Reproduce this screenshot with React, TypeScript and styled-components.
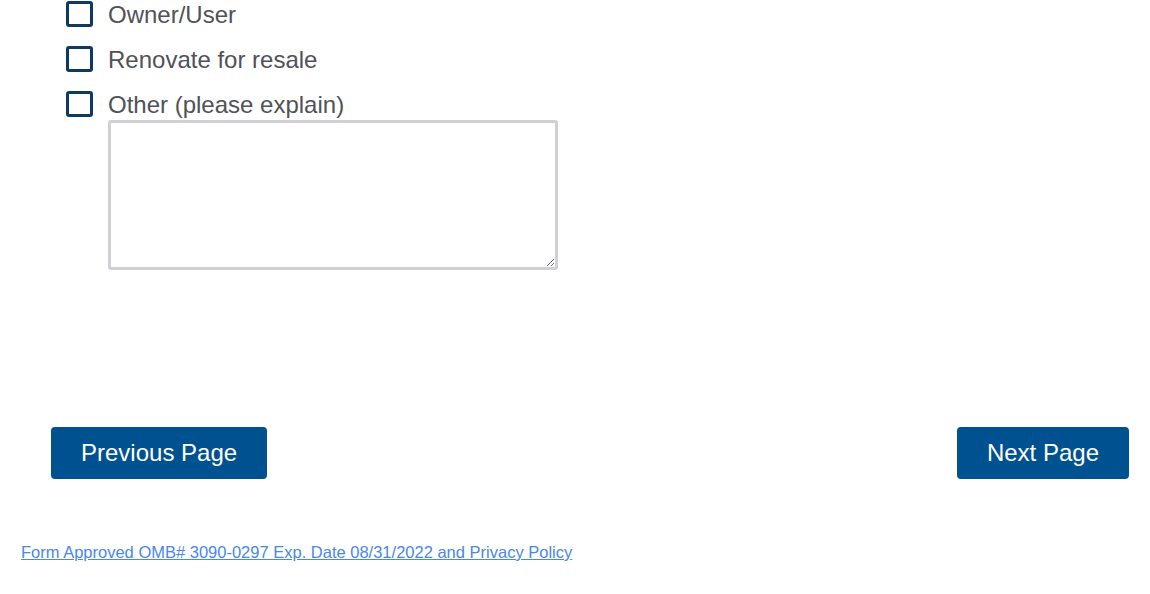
import React from "react";
import styled, { createGlobalStyle } from "styled-components";

const Global = createGlobalStyle`
  html, body { margin: 0; padding: 0; background: #fff; }
  body { font-family: Arial, "Liberation Sans", Helvetica, sans-serif; }
  * { box-sizing: border-box; }
`;

const Page = styled.div`
  display: flex;
  flex-direction: column;
  padding: 0 21px;
  width: 1150px;
`;

const OptionList = styled.div`
  display: flex;
  flex-direction: column;
  gap: 17px;
  padding-left: 45px;
`;

const Option = styled.label`
  display: flex;
  align-items: center;
  gap: 15px;
  height: 28px;
  cursor: pointer;
`;

const OptionText = styled.span`
  font-size: 24px;
  line-height: 28px;
  padding-top: 2px;
  color: #505257;
`;

const Box = styled.span`
  display: block;
  width: 27px;
  height: 26px;
  border: 3px solid #0e3a61;
  border-radius: 3px;
  background: #fff;
  flex: none;
`;

const Explain = styled.textarea`
  display: block;
  margin: 2px 0 0 87px;
  width: 450px;
  height: 150px;
  border: 3px solid #d0d0d4;
  border-radius: 3px;
  font-family: inherit;
  font-size: 16px;
  outline: none;
`;

const Nav = styled.div`
  display: flex;
  justify-content: space-between;
  align-items: center;
  margin-top: 157px;
  padding-left: 30px;
`;

const NavButton = styled.button`
  height: 52px;
  padding: 0 30px;
  border: none;
  border-radius: 4px;
  background: #005190;
  color: #fff;
  font-family: Arial, "Liberation Sans", Helvetica, sans-serif;
  font-size: 24px;
  cursor: pointer;
`;

const Footer = styled.div`
  margin-top: 64px;
  font-size: 16.5px;
  line-height: 19px;
`;

const FooterLink = styled.a`
  color: #4a87e6;
  text-decoration: underline;
`;

const options = ["Owner/User", "Renovate for resale", "Other (please explain)"];

export default function App() {
  return (
    <>
      <Global />
      <Page>
        <OptionList>
          {options.map((o) => (
            <Option key={o}>
              <Box />
              <OptionText>{o}</OptionText>
            </Option>
          ))}
        </OptionList>
        <Explain />
        <Nav>
          <NavButton>Previous Page</NavButton>
          <NavButton>Next Page</NavButton>
        </Nav>
        <Footer>
          <FooterLink href="#">
            Form Approved OMB# 3090-0297 Exp. Date 08/31/2022 and Privacy Policy
          </FooterLink>
        </Footer>
      </Page>
    </>
  );
}
